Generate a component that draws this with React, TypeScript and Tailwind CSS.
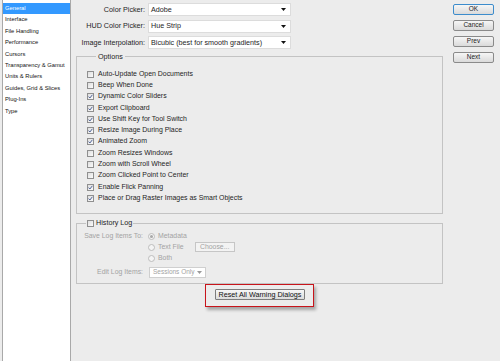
const sections = [
  "General",
  "Interface",
  "File Handling",
  "Performance",
  "Cursors",
  "Transparency & Gamut",
  "Units & Rulers",
  "Guides, Grid & Slices",
  "Plug-Ins",
  "Type",
];

const pickers = [
  { label: "Color Picker:", value: "Adobe" },
  { label: "HUD Color Picker:", value: "Hue Strip" },
  { label: "Image Interpolation:", value: "Bicubic (best for smooth gradients)" },
];

const options: [string, boolean][] = [
  ["Auto-Update Open Documents", false],
  ["Beep When Done", false],
  ["Dynamic Color Sliders", true],
  ["Export Clipboard", true],
  ["Use Shift Key for Tool Switch", true],
  ["Resize Image During Place", true],
  ["Animated Zoom", true],
  ["Zoom Resizes Windows", false],
  ["Zoom with Scroll Wheel", false],
  ["Zoom Clicked Point to Center", false],
  ["Enable Flick Panning", true],
  ["Place or Drag Raster Images as Smart Objects", true],
];

const Arrow = ({ muted = false }: { muted?: boolean }) => (
  <svg width="5" height="3" viewBox="0 0 5 3" className="shrink-0">
    <path d="M0 0h5L2.5 3z" fill={muted ? "#9a9a9a" : "#111"} />
  </svg>
);

const Check = ({ on }: { on: boolean }) => (
  <span className="flex h-[7px] w-[7px] shrink-0 items-center justify-center border border-[#8f8f8f] bg-gradient-to-br from-[#dedede] to-[#fbfbfb]">
    {on && (
      <svg width="5" height="5" viewBox="0 0 5 5">
        <path d="M0.6 2.6 L1.9 4 L4.4 0.8" fill="none" stroke="#3d5390" strokeWidth="0.9" />
      </svg>
    )}
  </span>
);

const Radio = ({ on }: { on: boolean }) => (
  <span className="flex h-[7px] w-[7px] shrink-0 items-center justify-center rounded-full border border-[#bdbdbd] bg-[#f4f4f4]">
    {on && <span className="h-[3px] w-[3px] rounded-full bg-[#a8a8a8]" />}
  </span>
);

const SideButton = ({ label, primary }: { label: string; primary?: boolean }) => (
  <button
    className={`flex h-[11px] w-[41px] items-center justify-center rounded-[2px] border bg-gradient-to-b from-[#f6f6f6] to-[#dadada] text-[6.5px] leading-none text-[#222] ${
      primary ? "border-[#3c8ccc]" : "border-[#8a8a8a]"
    }`}
  >
    {label}
  </button>
);

export default function App() {
  return (
    <div
      className="flex h-[361px] w-[500px] overflow-hidden bg-[#ececec] text-[#1e1e1e]"
      style={{ fontFamily: '"Liberation Sans", Arial, sans-serif' }}
    >
      {/* section list */}
      <div className="ml-[2px] flex w-[69px] flex-col border-x border-[#a9a9a9] bg-white pt-[3px]">
        {sections.map((s, i) => (
          <div
            key={s}
            className={`flex h-[11.45px] items-center whitespace-nowrap pl-[2px] text-[5.8px] leading-none ${
              i === 0 ? "bg-[#3399ff] text-white" : "text-[#111]"
            }`}
          >
            {s}
          </div>
        ))}
      </div>

      <div className="flex flex-1 pl-[5px]">
        <div className="flex w-[367px] flex-col text-[7.2px] leading-none">
          {/* pickers */}
          <div className="flex flex-col gap-[3.5px] pt-[3px]">
            {pickers.map((p) => (
              <div key={p.label} className="flex h-[13px] items-center">
                <span className="w-[69px] whitespace-nowrap text-right">{p.label}</span>
                <div className="ml-[3px] flex h-[13px] w-[143px] items-center justify-between border border-[#dcdcdc] bg-white pl-[2px] pr-[4px]">
                  <span className="whitespace-nowrap">{p.value}</span>
                  <Arrow />
                </div>
              </div>
            ))}
          </div>

          {/* options */}
          <fieldset className="mt-[2.5px] border border-[#c3c3c3] px-[10px] pb-[8.5px] pt-[8px] text-[6.95px]">
            <legend className="ml-[9px] h-[9px] px-[2px] text-[7.2px] leading-[9px]">Options</legend>
            {options.map(([label, on]) => (
              <div key={label} className="flex h-[11.3px] items-center gap-[4px]">
                <Check on={on} />
                <span className="whitespace-nowrap">{label}</span>
              </div>
            ))}
          </fieldset>

          {/* history log */}
          <fieldset className="mt-[5px] border border-[#c3c3c3] pb-[4.5px] pt-[3px] text-[6.9px] text-[#a3a3a3]">
            <legend className="ml-[9px] flex h-[9px] items-center gap-[2px] px-[1px] text-[7.2px] text-[#1e1e1e]">
              <Check on={false} />
              <span>History Log</span>
            </legend>
            <div className="flex">
              <span className="w-[66px] pt-[2px] text-right">Save Log Items To:</span>
              <div className="ml-[5px] flex flex-col">
                <div className="flex h-[11px] items-center gap-[3px]">
                  <Radio on />
                  <span>Metadata</span>
                </div>
                <div className="flex h-[11px] items-center gap-[3px]">
                  <Radio on={false} />
                  <span>Text File</span>
                  <span className="ml-[8px] flex h-[10px] w-[40px] items-center justify-center border border-[#c6c6c6] bg-[#f3f3f3]">
                    Choose...
                  </span>
                </div>
                <div className="flex h-[11px] items-center gap-[3px]">
                  <Radio on={false} />
                  <span>Both</span>
                </div>
              </div>
            </div>
            <div className="mt-[3.5px] flex h-[11px] items-center">
              <span className="w-[66px] text-right">Edit Log Items:</span>
              <div className="ml-[6px] flex h-[11px] w-[57px] items-center justify-between border border-[#cfcfcf] bg-white pl-[3px] pr-[3px]">
                <span className="whitespace-nowrap text-[6.5px]">Sessions Only</span>
                <Arrow muted />
              </div>
            </div>
          </fieldset>

          {/* reset */}
          <div className="mt-[0.5px] flex justify-center">
            <div className="border border-[#c8141b] pb-[6px] pl-[9px] pr-[8px] pt-[4px] shadow-[2px_3px_3px_rgba(0,0,0,0.3)]">
              <button className="flex h-[11px] w-[90px] items-center justify-center rounded-[1px] border border-[#7d7d7d] bg-gradient-to-b from-[#f7f7f7] to-[#dcdcdc] text-[7.2px] leading-none text-[#111]">
                Reset All Warning Dialogs
              </button>
            </div>
          </div>
        </div>

        {/* buttons */}
        <div className="ml-[10px] flex flex-col gap-[5px] pt-[4px]">
          <SideButton label="OK" primary />
          <SideButton label="Cancel" />
          <SideButton label="Prev" />
          <SideButton label="Next" />
        </div>
      </div>
    </div>
  );
}
